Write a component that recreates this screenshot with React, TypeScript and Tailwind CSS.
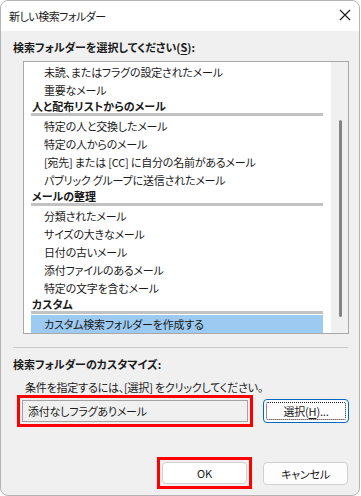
import React from "react";

type Row = { kind: "item" | "header"; text: string; selected?: boolean };

const rows: Row[] = [
  { kind: "item", text: "未読、またはフラグの設定されたメール" },
  { kind: "item", text: "重要なメール" },
  { kind: "header", text: "人と配布リストからのメール" },
  { kind: "item", text: "特定の人と交換したメール" },
  { kind: "item", text: "特定の人からのメール" },
  { kind: "item", text: "[宛先] または [CC] に自分の名前があるメール" },
  { kind: "item", text: "パブリック グループに送信されたメール" },
  { kind: "header", text: "メールの整理" },
  { kind: "item", text: "分類されたメール" },
  { kind: "item", text: "サイズの大きなメール" },
  { kind: "item", text: "日付の古いメール" },
  { kind: "item", text: "添付ファイルのあるメール" },
  { kind: "item", text: "特定の文字を含むメール" },
  { kind: "header", text: "カスタム" },
  { kind: "item", text: "カスタム検索フォルダーを作成する", selected: true },
];

const font =
  "font-['Noto_Sans_CJK_JP','Noto_Sans',sans-serif] [font-feature-settings:'palt'] text-[11px] tracking-[-0.2px]";

const App = () => {
  return (
    <div className={`w-[361px] h-[496px] bg-white text-[#1a1a1a] ${font}`}>
      <div className="w-[360px] h-[496px] border border-[#b4b4b4] rounded-[8px] overflow-hidden flex flex-col bg-[#f0f0f0]">
        {/* TITLE BAR */}
        <div className="h-[30px] bg-white flex items-center justify-between shrink-0">
          <span className="pl-[8px] leading-[16px] tracking-[-0.5px]">新しい検索フォルダー</span>
          <svg width="12" height="12" viewBox="0 0 12 12" className="mr-[8px] mt-[-2px]">
            <path d="M1 1 L11 11 M11 1 L1 11" stroke="#1a1a1a" strokeWidth="1.1" fill="none" />
          </svg>
        </div>

        {/* LIST */}
        <div className="mt-[8px] ml-[12px] leading-[16px] font-bold tracking-normal">
          検索フォルダーを選択してください(<span className="underline underline-offset-2">S</span>):
        </div>
        <div className="mt-[6px] ml-[22px] w-[326px] h-[273px] border border-[#a8a8a8] bg-white flex shrink-0">
          <div className="flex-1 pt-[1px] pl-[7px]">
            {rows.map((row, i) =>
              row.kind === "header" ? (
                <div key={i} className="w-[292px] h-[18px] pb-[1px]">
                  <div className="h-[17px] border-b-[3px] border-[#c2c2c2] pl-[1px] font-bold tracking-normal leading-[15px]">
                    {row.text}
                  </div>
                </div>
              ) : (
                <div
                  key={i}
                  className={`w-[292px] h-[18px] pl-[13px] leading-[18px] whitespace-nowrap ${
                    row.selected ? "bg-[#9ccaf0]" : ""
                  }`}
                >
                  {row.text}
                </div>
              )
            )}
          </div>
          <div className="w-[17px] bg-[#f0f0f0] flex justify-center">
            <div className="w-[3px] mt-[58px] h-[197px] bg-[#858585] rounded-full ml-[1px]" />
          </div>
        </div>

        <div className="mt-[13px] ml-[12px] w-[335px] h-px bg-[#c9c9c9]" />

        {/* CUSTOMIZE */}
        <div className="mt-[8px] ml-[12px] leading-[16px] font-bold tracking-normal">
          検索フォルダーのカスタマイズ:
        </div>
        <div className="mt-[8px] ml-[24px] leading-[15px]">
          条件を指定するには、[選択] をクリックしてください。
        </div>
        <div className="flex items-start">
          <div className="ml-[16px] w-[236px] h-[32px] border-[3px] border-[#f00] p-[2px]">
            <div className="h-full border border-[#a3a3a3] bg-[#f0f0f0] pl-[5px] leading-[20px]">
              添付なしフラグありメール
            </div>
          </div>
          <button className="ml-[10px] mt-[4px] w-[86px] h-[24px] rounded-[4px] border border-[#0067c0] bg-[#fdfdfd] p-[2px]">
            <div className="h-full border border-dotted border-[#222] rounded-[2px] flex items-center justify-center leading-[16px]">
              選択(<span className="underline underline-offset-2">H</span>)...
            </div>
          </button>
        </div>

        {/* FOOTER */}
        <div className="mt-[30px] flex items-start">
          <div className="ml-[156px] w-[95px] h-[32px] border-[3px] border-[#f00] p-[2px]">
            <button className="w-full h-full rounded-[4px] border border-[#d0d0d0] bg-white leading-[16px]">
              OK
            </button>
          </div>
          <button className="ml-[11px] mt-[5px] w-[85px] h-[23px] rounded-[4px] border border-[#d0d0d0] bg-[#fdfdfd] leading-[16px]">
            キャンセル
          </button>
        </div>
      </div>
    </div>
  );
};

export default App;
